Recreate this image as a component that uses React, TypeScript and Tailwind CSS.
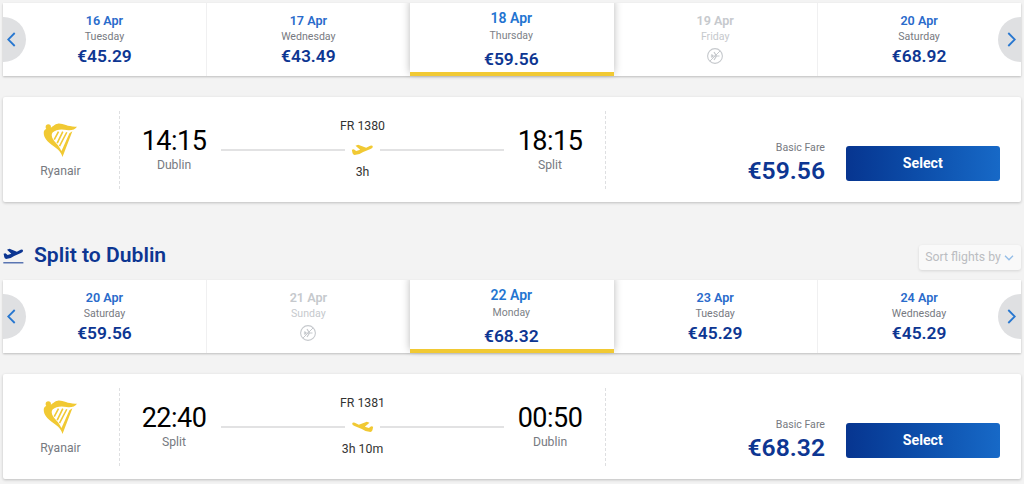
import React from 'react';

type Day = { date: string; weekday: string; price?: string; active?: boolean };

type Flight = {
  number: string;
  duration: string;
  departure: string;
  from: string;
  arrival: string;
  to: string;
  price: string;
  reverse?: boolean;
};

const outboundDays: Day[] = [
  { date: '16 Apr', weekday: 'Tuesday', price: '€45.29' },
  { date: '17 Apr', weekday: 'Wednesday', price: '€43.49' },
  { date: '18 Apr', weekday: 'Thursday', price: '€59.56', active: true },
  { date: '19 Apr', weekday: 'Friday' },
  { date: '20 Apr', weekday: 'Saturday', price: '€68.92' },
];

const returnDays: Day[] = [
  { date: '20 Apr', weekday: 'Saturday', price: '€59.56' },
  { date: '21 Apr', weekday: 'Sunday' },
  { date: '22 Apr', weekday: 'Monday', price: '€68.32', active: true },
  { date: '23 Apr', weekday: 'Tuesday', price: '€45.29' },
  { date: '24 Apr', weekday: 'Wednesday', price: '€45.29' },
];

const planePath =
  'M2 17 L8 16 L15 21 L27 17 L13 5 L21 2 L45 11 L57 5 Q64 3 65 8 Q65 12 58 15 L36 24 L25 30 L10 33 Q5 32 4 27 Z';

function HarpLogo() {
  return (
    <svg viewBox="0 0 104 106" className="block h-[35px] w-[35px]" fill="#f1c933">
      <circle cx="15" cy="12" r="8" />
      <path d="M20 15 C27 13 32 4 44 2 C60 0 74 13 102 11 C96 20 84 23 71 21 C54 18 38 19 28 29 C21 39 29 51 39 61 C47 70 51 77 55 85 L79 31 L88 25 L58 103 C53 84 39 76 25 66 C11 56 -2 42 2 24 C5 17 12 17 20 15 Z" />
      <g fill="none" stroke="#f1c933" strokeWidth="4.8">
        <path d="M46 26 L33 50 M59 26 L42 61 M71 28 L49 70" />
      </g>
    </svg>
  );
}

function Plane({ reverse }: { reverse?: boolean }) {
  return (
    <svg
      viewBox="0 0 68 36"
      className={reverse ? 'block h-3 w-[23px] -scale-x-100' : 'block h-3 w-[23px]'}
      fill="#f1c933"
    >
      <path d={planePath} />
    </svg>
  );
}

function NoFlights() {
  return (
    <svg viewBox="0 0 16 16" className="mt-[5px] block h-4 w-4" fill="none" stroke="#c6c9cd">
      <circle cx="8" cy="8" r="7.4" strokeWidth="1.1" />
      <path d="M13 3 L3 13" strokeWidth="1" />
      <path d="M3.8 8 H12.5 M7 4 L9.5 8 L7 12 M4.5 6.3 L5.8 8 L4.5 9.7" strokeWidth="1.2" />
    </svg>
  );
}

function Arrow({ next }: { next?: boolean }) {
  return (
    <button
      className={
        next
          ? 'absolute right-0 top-[14px] z-20 flex h-[45px] w-[22.5px] items-center justify-center rounded-l-full bg-[#dfe0e2] pl-[5px]'
          : 'absolute left-0 top-[14px] z-20 flex h-[45px] w-[22.5px] items-center rounded-r-full bg-[#dfe0e2] pl-1'
      }
    >
      <svg viewBox="0 0 9 15" className="block h-[15px] w-[9px]" fill="none" stroke="#2877d0" strokeWidth="1.8">
        <path d={next ? 'M1.3 1 L7.8 7.5 L1.3 14' : 'M7.7 1 L1.2 7.5 L7.7 14'} />
      </svg>
    </button>
  );
}

function DayTab({ day, divider }: { day: Day; divider: boolean }) {
  if (day.active) {
    return (
      <div className="relative z-10 flex flex-1 flex-col items-center border-b-4 border-[#f1c933] bg-white pr-px pt-[7px] shadow-[0_-3px_8px_rgba(0,0,0,0.28)]">
        <span className="text-[14px] font-semibold leading-4 text-[#2374d1]">{day.date}</span>
        <span className="mt-1 text-[10.5px] leading-3 text-[#7c7f87]">{day.weekday}</span>
        <span className="mt-[7px] text-[17.4px] font-semibold leading-5 text-[#0d3692]">{day.price}</span>
      </div>
    );
  }
  const disabled = !day.price;
  return (
    <div
      className={`flex flex-1 flex-col items-center pt-[10px] ${divider ? 'border-r border-[#f0f0f1]' : ''}`}
    >
      <span className={`text-[12.6px] font-semibold leading-4 ${disabled ? 'text-[#c6c9cd]' : 'text-[#2a6bcb]'}`}>
        {day.date}
      </span>
      <span className={`mt-[2px] text-[10.6px] leading-3 ${disabled ? 'text-[#c6c9cd]' : 'text-[#777a81]'}`}>
        {day.weekday}
      </span>
      {day.price ? (
        <span className="mt-[3px] text-[17.4px] font-semibold leading-5 text-[#0d3692]">
          {day.price}
        </span>
      ) : (
        <NoFlights />
      )}
    </div>
  );
}

function DayStrip({ days }: { days: Day[] }) {
  return (
    <div className="relative h-[73px] w-[1017.5px] bg-white shadow-[0_1px_2px_rgba(0,0,0,0.22)]">
      <div className="flex h-full overflow-x-clip [clip-path:inset(0_0_-4px_0)]">
        {days.map((day, i) => (
          <DayTab key={day.date} day={day} divider={i === 0 || i === 3} />
        ))}
      </div>
      <Arrow />
      <Arrow next />
    </div>
  );
}

function Stop({ time, city }: { time: string; city: string }) {
  return (
    <div className="flex w-16 flex-col items-center pt-[2px]">
      <span className="whitespace-nowrap text-[27px] leading-8 tracking-[-0.5px] text-black">{time}</span>
      <span className="text-[12.2px] leading-4 text-[#777a81]">{city}</span>
    </div>
  );
}

function FlightCard({ flight }: { flight: Flight }) {
  return (
    <div className="mt-[21px] flex h-[105px] w-[1017.5px] items-center rounded-[2px] bg-white shadow-[0_1px_3px_rgba(0,0,0,0.22)]">
      <div className="flex w-[116px] flex-col items-center pr-px pt-[3px]">
        <HarpLogo />
        <span className="mt-[5px] text-[12.2px] leading-4 text-[#777a81]">Ryanair</span>
      </div>
      <div className="flex h-[78px] w-[486.5px] items-center border-x border-dashed border-[#dedfe1]">
        <div className="flex w-full pl-[22px] pt-[3px]">
          <Stop time={flight.departure} city={flight.from} />
          <div className="ml-[15px] flex w-[283px] flex-col items-center">
            <span className="-mt-[5px] text-[12.3px] leading-4 text-[#333]">{flight.number}</span>
            <div className="mt-[10px] flex w-full items-center justify-between">
              <span className="h-[2px] w-[124px] bg-[#e2e2e3]" />
              <Plane reverse={flight.reverse} />
              <span className="h-[2px] w-[124px] bg-[#e2e2e3]" />
            </div>
            <span className="mt-2 text-[12.3px] leading-4 text-[#333]">{flight.duration}</span>
          </div>
          <div className="ml-[14px]">
            <Stop time={flight.arrival} city={flight.to} />
          </div>
        </div>
      </div>
      <div className="flex flex-1 items-center justify-end pr-[21px]">
        <div className="flex flex-col items-end pt-[30px]">
          <span className="text-[10.6px] leading-3 text-[#777a81]">Basic Fare</span>
          <span className="mt-px text-[24.7px] font-semibold leading-8 text-[#0d3692]">{flight.price}</span>
        </div>
        <button className="ml-[21px] mt-7 h-[35px] w-[153.5px] rounded-[3px] bg-gradient-to-r from-[#073590] to-[#1769c7] text-[14.2px] font-bold text-white">
          Select
        </button>
      </div>
    </div>
  );
}

function SectionHeader() {
  return (
    <div className="mt-[42px] flex h-9 w-[1017.5px] items-start">
      <svg viewBox="0 0 68 48" className="mt-1 block h-4 w-[21px]" fill="#0d3692" preserveAspectRatio="none">
        <path d={planePath} />
        <path d="M1 43 H66 V46 H1 Z" />
      </svg>
      <h2 className="-mt-px ml-[10px] text-[21.1px] font-semibold leading-6 text-[#0d3692]">Split to Dublin</h2>
      <button className="ml-auto mt-px flex h-[25px] w-[102px] items-center justify-center gap-[3px] rounded-[3px] bg-[#f9f9f9] text-[12.3px] text-[#bbbdc1] shadow-[0_1px_3px_rgba(0,0,0,0.12)]">
        Sort flights by
        <svg viewBox="0 0 10 6" className="block h-[6px] w-[10px]" fill="none" stroke="#93bde8" strokeWidth="1.3">
          <path d="M1 0.8 L5 4.8 L9 0.8" />
        </svg>
      </button>
    </div>
  );
}

export default function App() {
  return (
    <main className="flex h-[484px] w-[1024px] flex-col overflow-hidden bg-[#f3f3f3] pl-[3px] pt-[3px] font-['Roboto','Liberation_Sans',sans-serif]">
      <DayStrip days={outboundDays} />
      <FlightCard
        flight={{
          number: 'FR 1380',
          duration: '3h',
          departure: '14:15',
          from: 'Dublin',
          arrival: '18:15',
          to: 'Split',
          price: '€59.56',
        }}
      />
      <SectionHeader />
      <DayStrip days={returnDays} />
      <FlightCard
        flight={{
          number: 'FR 1381',
          duration: '3h 10m',
          departure: '22:40',
          from: 'Split',
          arrival: '00:50',
          to: 'Dublin',
          price: '€68.32',
          reverse: true,
        }}
      />
    </main>
  );
}
